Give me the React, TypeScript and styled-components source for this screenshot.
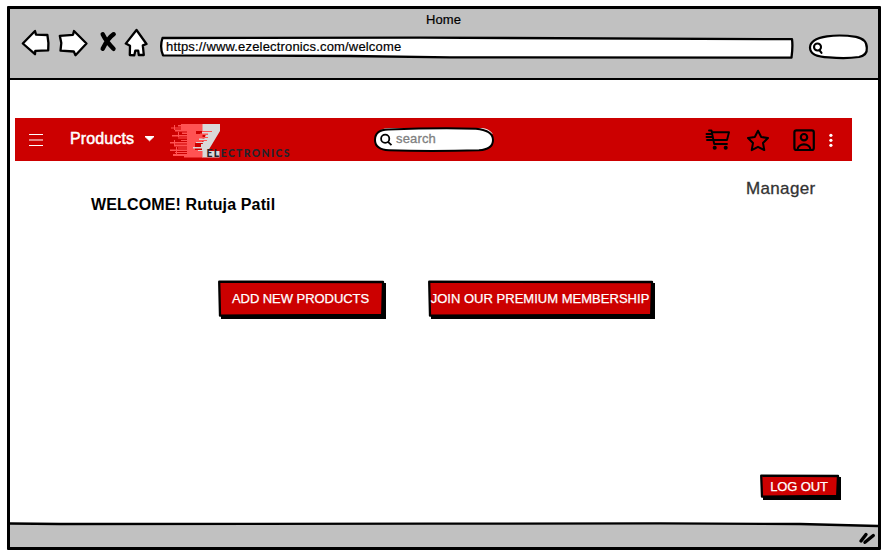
import React from "react";
import styled, { createGlobalStyle } from "styled-components";

const GlobalStyle = createGlobalStyle`
  * { box-sizing: border-box; }
  body { margin: 0; background: #fff; font-family: "Liberation Sans", Arial, sans-serif; color: #000; overflow: hidden; }
  svg { display: block; flex: none; }
`;

const Window = styled.div`
  width: 874px;
  height: 544px;
  margin: 6px 0 0 7px;
  border: 3px solid #000;
  border-radius: 1px;
  display: flex;
  flex-direction: column;
  background: #fff;
`;

const Chrome = styled.header`
  height: 71px;
  flex: none;
  background: #c1c1c1;
  border-bottom: 2px solid #000;
`;

const Title = styled.div`
  height: 21px;
  padding-left: 416px;
  font-size: 13px;
  line-height: 22px;
  letter-spacing: 0.1px;
  -webkit-text-stroke: 0.2px #000;
`;

const ToolRow = styled.div`
  display: flex;
  align-items: flex-start;
  padding-left: 10px;
  margin-top: -4px;
`;

const Field = styled.div<{ $w: number; $h: number; $ml: number; $mt?: number }>`
  position: relative;
  width: ${(p) => p.$w}px;
  height: ${(p) => p.$h}px;
  margin-left: ${(p) => p.$ml}px;
  margin-top: ${(p) => p.$mt ?? 0}px;
  flex: none;
`;

const Outline = styled.svg`
  position: absolute;
  inset: 0;
  overflow: visible;
`;

const Url = styled.span`
  position: relative;
  display: block;
  padding: 11px 0 0 8px;
  font-size: 13px;
  line-height: 16px;
  letter-spacing: 0.17px;
  white-space: nowrap;
  -webkit-text-stroke: 0.2px #000;
`;

const Main = styled.main`
  flex: 1;
  display: flex;
  flex-direction: column;
  padding: 38px 26px 0 5px;
`;

const Nav = styled.nav`
  height: 43px;
  flex: none;
  display: flex;
  align-items: flex-start;
  background: #cc0000;
`;

const Menu = styled.div`
  display: flex;
  align-items: center;
  gap: 10px;
  height: 41px;
  width: 86px;
  margin-left: 27px;
  color: #fff;
  font-size: 16px;
  letter-spacing: 0.12px;
  -webkit-text-stroke: 0.5px #fff;
`;

const Query = styled.span`
  position: relative;
  display: block;
  padding: 4px 0 0 23px;
  font-size: 13px;
  line-height: 16px;
  color: #808080;
  letter-spacing: 0.15px;
  -webkit-text-stroke: 0.3px #808080;
`;

const Headings = styled.div`
  display: flex;
  justify-content: space-between;
  height: 119px;
  padding: 0 36px 0 76px;
`;

const Welcome = styled.h1`
  margin: 35px 0 0;
  font-size: 16px;
  line-height: 18px;
  font-weight: 700;
  letter-spacing: 0.14px;
  white-space: nowrap;
`;

const Role = styled.div`
  width: 70px;
  margin-top: 18px;
  font-size: 17px;
  line-height: 20px;
  letter-spacing: 0.35px;
  color: #333;
  -webkit-text-stroke: 0.3px #333;
  white-space: nowrap;
`;

const Actions = styled.div`
  display: flex;
  gap: 42px;
  padding-left: 203px;
`;

const Button = styled.button<{ $w: number; $h: number; $track: number }>`
  position: relative;
  width: ${(p) => p.$w}px;
  height: ${(p) => p.$h}px;
  flex: none;
  padding: 0 3px 1px 0;
  border: 0;
  background: none;
  color: #fff;
  font-family: inherit;
  font-size: 13px;
  line-height: 16px;
  letter-spacing: ${(p) => p.$track}px;
  -webkit-text-stroke: 0.25px #fff;
  white-space: nowrap;
`;

const Label = styled.span`
  position: relative;
`;

const LogoutRow = styled.div`
  display: flex;
  justify-content: flex-end;
  margin: auto 11px 24px 0;
`;

const Footer = styled.footer`
  position: relative;
  height: 23px;
  flex: none;
  background: #c1c1c1;
`;

const Spaced = styled.div<{ $l: number; $t?: number }>`
  margin-left: ${(p) => p.$l}px;
  margin-top: ${(p) => p.$t ?? 0}px;
`;

const BrowserIcons = () => (
  <svg width="128" height="30" viewBox="20 28 128 30" fill="#fff" stroke="#000" strokeWidth="2.3" strokeLinejoin="round" strokeLinecap="round">
    <path d="M35 31 L22.8 43.5 L35 54.2 L35.3 50.8 L48.2 50.4 Q49 43 47.4 35 L36 34.6 Z" />
    <path d="M74 31 L86.5 43.5 L75.5 55.2 L73.8 51.5 L60.5 50.6 L61.3 43 L59.8 35.8 L73 34.8 Z" />
    <path d="M102.7 34.2 Q106 41 113.5 48.8 M113.7 34.2 Q108 38 102.7 48.8" strokeWidth="4.4" />
    <path d="M136.5 30 L146.5 44 L142.8 45.3 L143.8 55 L138.8 55 L138.2 50.7 L135.3 50.7 L134.3 55.3 L129.8 55 L130 45.8 L125.8 43.6 Z" />
  </svg>
);

const SketchButton = ({ w, h, track, children }: { w: number; h: number; track: number; children: React.ReactNode }) => (
  <Button $w={w} $h={h} $track={track}>
    <Outline width={w} height={h} viewBox={`0 0 ${w} ${h}`}>
      <path d={`M3 3 H${w} V${h} H3 Z`} fill="#000" />
      <path d={`M1.2 1.7 L${w - 3} 2 L${w - 3.8} ${h - 4.2} L2 ${h - 3.4} Z`} fill="#cc0000" stroke="#000" strokeWidth="2.3" strokeLinejoin="round" />
    </Outline>
    <Label>{children}</Label>
  </Button>
);

const Logo = () => (
  <svg width="123" height="36" viewBox="168 123 123 36">
    <path d="M202 124H220V131L208 151H219.5V157.5H202V146L206 134H202Z" fill="#d9d9d9" />
    <g fill="#ff5353">
      <path d="M181 124H202.5V131H196V134H202.5V143H195V150H202.5V157.5H184V154H187V130H181Z" />
      <path d="M178 125h10v1.5h-10zM171 127.5h14v1h-14zM175 129.5h14v2h-14zM182 132.5h8v1.5h-8zM172 135h17v1.5h-17zM178 137.5h10v1h-10zM181 140h8v1h-8zM170 142h18v1.5h-18zM174 144.5h14v2h-14zM178 147.5h10v1h-10zM170 149.5h18v1.5h-18zM175 152h14v1h-14zM173 154h14v2h-14z" />
      <path d="M174 125h1v5h-1zM178 132h1v5h-1zM174 140h1v5h-1zM176 147h1v7h-1z" />
      <path d="M202 131h10v1h-10zM200 133.5h8v1.5h-8zM201 137h7v1h-7zM202 140h5v1h-5z" />
    </g>
    <g fill="#d9d9d9">
      <path d="M199 138.5h11v1.5h-11zM196 142h12v1h-12zM201 144h6v3h-6zM193 147h12v1.5h-12zM198 150h6v1h-6z" />
    </g>
    <text x="206.5" y="157" textLength="83" lengthAdjust="spacing" fontFamily="Lato, sans-serif" fontWeight="900" fontSize="10.3" fill="#24242c">ELECTRONICS</text>
  </svg>
);

const CartIcon = () => (
  <svg width="26" height="23" viewBox="705 129.5 26 23" fill="none" stroke="#000" strokeWidth="1.9" strokeLinecap="round" strokeLinejoin="round">
    <path d="M709 131H711.5L714.2 144.5H727M712 132.7H729L727 140.5H714M706.5 134.5H711M706.5 137.5H711.5M707 140.5H712" />
    <circle cx="714.7" cy="148.2" r="1.1" fill="#000" />
    <circle cx="725.7" cy="148.2" r="1.1" fill="#000" />
  </svg>
);

const StarIcon = () => (
  <svg width="24" height="24" viewBox="746 128 24 24" fill="none" stroke="#000" strokeWidth="2" strokeLinejoin="round">
    <path d="M758 130.7L761.2 137L768 138L763 143L764.3 150.1L758 146.8L751.7 150.1L753 143L748 138L754.8 137Z" />
  </svg>
);

const ProfileIcon = () => (
  <svg width="24" height="24" viewBox="792 128 24 24" fill="none" stroke="#000" strokeWidth="2.2">
    <rect x="794.4" y="130.4" width="19.4" height="19.6" rx="2" />
    <circle cx="804" cy="137.2" r="3.2" />
    <path d="M797.5 150C797.5 142.5 810.5 142.5 810.5 150" />
  </svg>
);

export default function App() {
  return (
    <>
      <GlobalStyle />
      <Window>
        <Chrome>
          <Title>Home</Title>
          <ToolRow>
            <Spaced $l={0} $t={2}><BrowserIcons /></Spaced>
            <Field $w={634} $h={32} $ml={10} $mt={2}>
              <Outline width="634" height="32" viewBox="158 28 634 32">
                <path d="M162.5 38 L420 37.6 L792 39.2 Q793 46 791.5 57.6 L450 57.3 L350 56 L163 55.3 Q159.5 47 162.5 38Z" fill="#fff" stroke="#000" strokeWidth="2.3" strokeLinejoin="round" />
              </Outline>
              <Url>https://www.ezelectronics.com/welcome</Url>
            </Field>
            <Field $w={62} $h={30} $ml={15} $mt={2}>
              <Outline width="62" height="30" viewBox="807 28 62 30">
                <path d="M827 36.3 Q841 34.5 856 36.8 Q867 39 866.8 48 Q867.5 55 859 57 Q845 59 829 57.3 Q810 57 810 47.5 Q810 39 827 36.3Z" fill="#fff" stroke="#000" strokeWidth="2.2" />
                <path d="M821 47a3.5 3.5 0 1 1-7 0a3.5 3.5 0 1 1 7 0M819.3 50L821.5 52.8" fill="none" stroke="#000" strokeWidth="2.1" strokeLinecap="round" />
              </Outline>
            </Field>
          </ToolRow>
        </Chrome>
        <Main>
          <Nav>
            <Spaced $l={14} $t={15}>
              <svg width="14" height="14" stroke="#fff" strokeWidth="1.2"><path d="M0 1.5H14M0 7H14M0 12.5H14" /></svg>
            </Spaced>
            <Menu>
              Products
              <svg width="11" height="7" viewBox="0 0 11 7"><path d="M1 1.5H10L5.5 5.8Z" fill="#fff" stroke="#fff" strokeLinejoin="round" /></svg>
            </Menu>
            <Spaced $l={12} $t={5}><Logo /></Spaced>
            <Field $w={122} $h={28} $ml={82} $mt={9}>
              <Outline width="122" height="28" viewBox="373 127 122 28">
                <path d="M376 136 Q380 128.8 389 128.8 H482 Q488 129 492 134" fill="none" stroke="#f6eaea" strokeWidth="1.6" />
                <path d="M388 129.6 Q440 127.6 476 128.8 Q493 130.5 493 140 Q493 149.3 479 150.3 Q430 151.8 389 150.3 Q375 149.5 375 140 Q375 130 388 129.6Z" fill="#fff" stroke="#000" strokeWidth="2" />
                <path d="M389.3 138.7a4.1 4.1 0 1 1-8.2 0a4.1 4.1 0 1 1 8.2 0M388 141.8L391.5 145.2" fill="none" stroke="#000" strokeWidth="1.8" />
              </Outline>
              <Query>search</Query>
            </Field>
            <Spaced $l={210} $t={11}><CartIcon /></Spaced>
            <Spaced $l={15} $t={10}><StarIcon /></Spaced>
            <Spaced $l={22} $t={10}><ProfileIcon /></Spaced>
            <Spaced $l={12} $t={15}>
              <svg width="5" height="15" fill="#fff"><circle cx="2.9" cy="2.3" r="1.6" /><circle cx="2.9" cy="7.3" r="1.6" /><circle cx="2.9" cy="12.3" r="1.6" /></svg>
            </Spaced>
          </Nav>
          <Headings>
            <Welcome>WELCOME! Rutuja Patil</Welcome>
            <Role>Manager</Role>
          </Headings>
          <Actions>
            <SketchButton w={168} h={39} track={-0.05}>ADD NEW PRODUCTS</SketchButton>
            <SketchButton w={227} h={39} track={0.02}>JOIN OUR PREMIUM MEMBERSHIP</SketchButton>
          </Actions>
          <LogoutRow>
            <SketchButton w={81} h={26} track={-0.15}>LOG OUT</SketchButton>
          </LogoutRow>
        </Main>
        <Footer>
          <Outline width="868" height="23" viewBox="10 524 868 23">
            <path d="M10 523 L430 523.5 L660 523 L800 523.8 L878 526 V520 H10Z" fill="#fff" />
            <path d="M10 523.5 L60 524 L430 523.7 L660 523.3 L800 524 L878 526" fill="none" stroke="#000" strokeWidth="2.3" />
            <path d="M861 541L866 534.5M865 542.3L873.3 535.5" stroke="#000" strokeWidth="3.4" strokeLinecap="round" />
          </Outline>
        </Footer>
      </Window>
    </>
  );
}
